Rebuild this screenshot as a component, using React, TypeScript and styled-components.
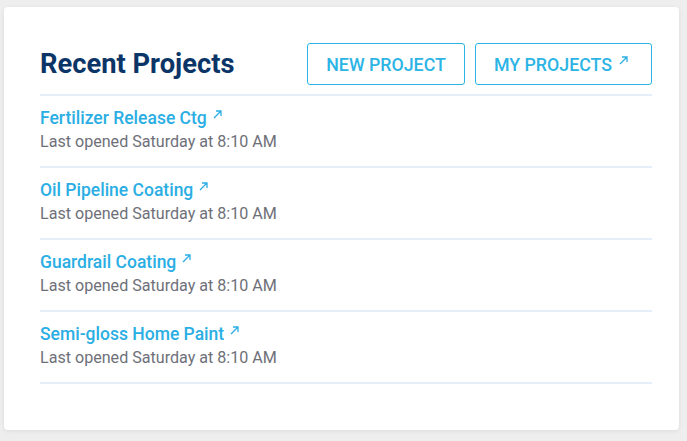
import styled, { createGlobalStyle } from "styled-components";

const GlobalStyle = createGlobalStyle`
  html, body {
    margin: 0;
    padding: 0;
    background: #eeeeee;
    font-family: Roboto, "Liberation Sans", Arial, sans-serif;
  }
`;

const projects = [
  "Fertilizer Release Ctg",
  "Oil Pipeline Coating",
  "Guardrail Coating",
  "Semi-gloss Home Paint",
];

const Page = styled.div`
  padding: 7px 8px 11px 4px;
`;

const Card = styled.div`
  background: #ffffff;
  border-radius: 4px;
  box-shadow: 0 1px 4px rgba(0, 0, 0, 0.08);
  padding: 36px 27px 49px 36px;
  height: 423px;
  box-sizing: border-box;
`;

const Header = styled.div`
  display: flex;
  align-items: center;
  justify-content: space-between;
  padding-bottom: 9px;
  border-bottom: 2px solid #e5eef9;
`;

const Title = styled.h2`
  margin: 0;
  font-size: 27.3px;
  font-weight: 700;
  color: #0b3567;
`;

const Actions = styled.div`
  display: flex;
  gap: 10px;
`;

const Button = styled.button<{ $withIcon?: boolean }>`
  display: flex;
  align-items: center;
  gap: 7px;
  height: 42px;
  padding: 0 ${(p) => (p.$withIcon ? 23 : 18)}px 0 18px;
  background: #fff;
  border: 1px solid #2cb4e5;
  border-radius: 3px;
  color: #2cb4e5;
  font-family: inherit;
  font-size: 17.8px;
  font-weight: 500;
  text-transform: uppercase;
  cursor: pointer;
`;

const Row = styled.div`
  display: flex;
  flex-direction: column;
  padding: 10px 0 12px;
  border-bottom: 2px solid #e5eef9;
`;

const ProjectLink = styled.a`
  display: flex;
  align-items: flex-start;
  gap: 6px;
  font-size: 17.5px;
  font-weight: 500;
  line-height: 24px;
  color: #2aaee3;
  text-decoration: none;
`;

const Meta = styled.div`
  font-size: 16.1px;
  line-height: 24px;
  color: #6e7079;
`;

const Arrow = styled.svg<{ $top: number }>`
  margin-top: ${(p) => p.$top}px;
  flex: none;
`;

const ExternalIcon = ({ top = 4 }: { top?: number }) => (
  <Arrow $top={top} width="9" height="9" viewBox="0 0 9 9" fill="none">
    <path d="M1 8 L8 1 M3 1 H8 V6" stroke="#2aaee3" strokeWidth="1.3" />
  </Arrow>
);

export default function App() {
  return (
    <>
      <GlobalStyle />
      <Page>
        <Card>
          <Header>
            <Title>Recent Projects</Title>
            <Actions>
              <Button>New Project</Button>
              <Button $withIcon>
                My Projects
                <ExternalIcon top={-7} />
              </Button>
            </Actions>
          </Header>
          {projects.map((name) => (
            <Row key={name}>
              <ProjectLink href="#">
                {name}
                <ExternalIcon />
              </ProjectLink>
              <Meta>Last opened Saturday at 8:10 AM</Meta>
            </Row>
          ))}
        </Card>
      </Page>
    </>
  );
}
